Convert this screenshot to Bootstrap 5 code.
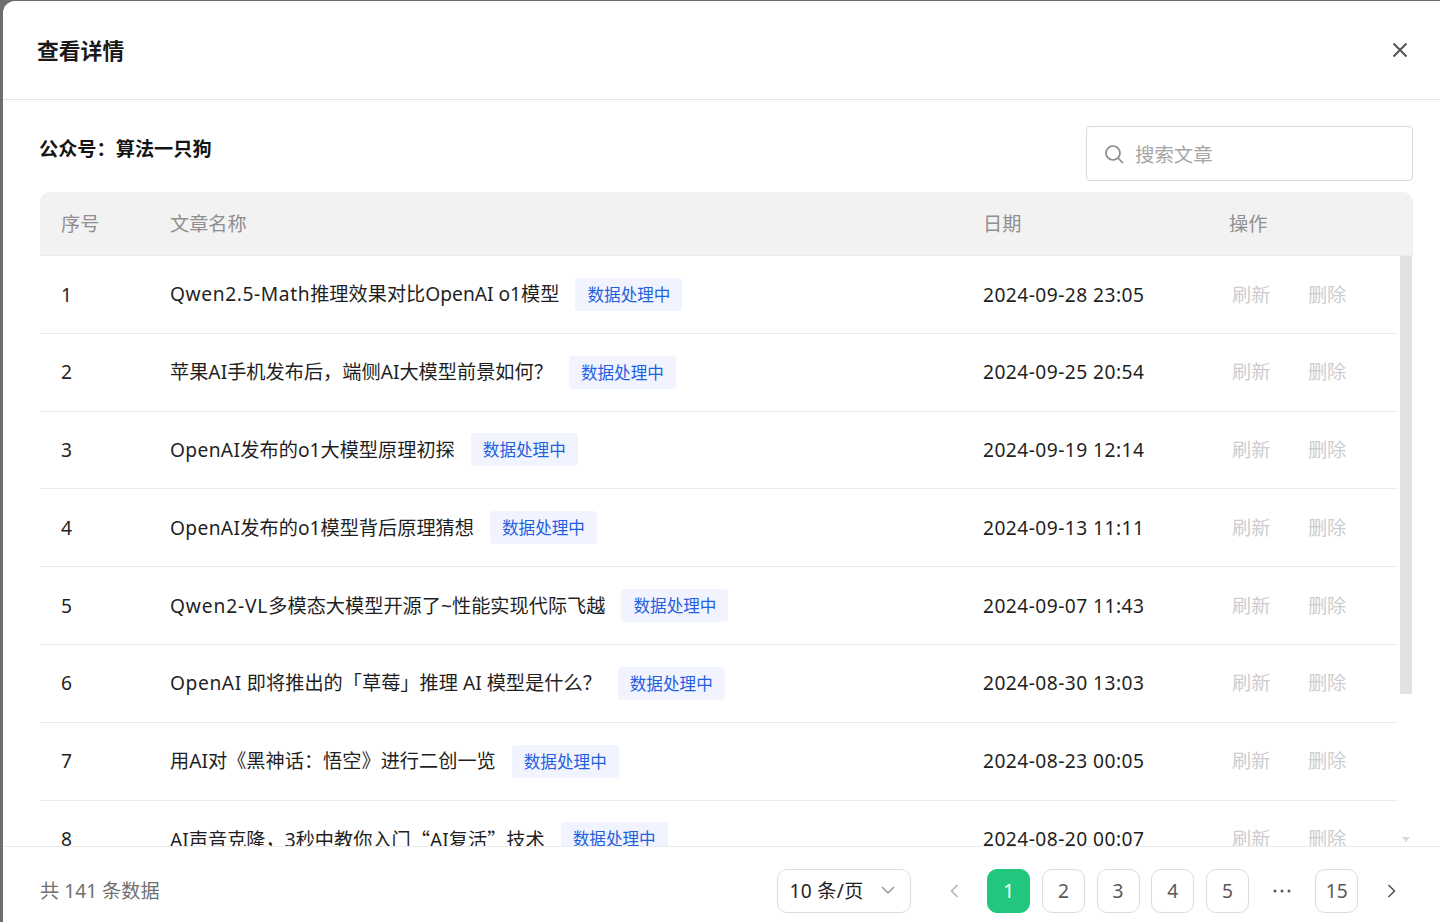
<!DOCTYPE html>
<html lang="zh">
<head>
<meta charset="utf-8">
<title>查看详情</title>
<link href="https://cdn.jsdelivr.net/npm/bootstrap@5.3.0/dist/css/bootstrap.min.css" rel="stylesheet">
<style>
html,body{height:100%;overflow:hidden}
body{background:#6e6e6e;font-family:"Noto Sans","Noto Sans CJK SC",sans-serif;font-size:19.2px;color:#1f1f1f}
.dlg{margin:1px 0 0 3px;height:921px;background:#fff;border-radius:12px 0 0 0;overflow:hidden}
.dlg-head{height:99px;padding:2px 32px 0 34px;border-bottom:1px solid #e3e5e7;flex:none}
.dlg-title{font-size:21.8px;font-weight:700;color:#1a1a1a}
.x-ic{margin-top:-2px}
.dlg-main{padding:26px 27px 0 37px;min-height:0;position:relative}
.acct{font-size:19.2px;font-weight:700;color:#141414;line-height:46px;margin-left:-1px}
.srch{width:327px;height:55px;border:1px solid #d9d9d9;border-radius:4px;padding:0 17px;gap:11px;color:#a6a6a6;font-size:19.4px}
.srch-t{padding-top:2px}
.tbl-wrap{margin-top:11px;position:relative;min-height:0;overflow:hidden}
.tbl-head{height:64px;padding-top:2px;background:#f2f2f2;border-radius:10px 10px 0 0;border-bottom:1px solid #e8ebef;color:#8f8f8f}
.tbl-row{height:77.8px;margin-right:15px;border-bottom:1px solid #e8ebef}
.tbl-row .c1,.tbl-row .c3,.tbl-row .c4,.c2>span:first-child{padding-top:1px}
.c1{width:130px;padding-left:21px;flex:none}
.c2{width:813px;flex:none;gap:16px}
.c3{width:246px;flex:none}
.tbl-row .c3{letter-spacing:.45px}
.c4{flex:none;gap:37.5px;color:#cdcdcd;padding-left:3px}
.tbl-head .c4{color:#8f8f8f;padding-left:0}
.tag{background:#f1f4ff;color:#1f5fe0;border-radius:4px;padding:0 12px;height:33px;line-height:33px;font-size:16.6px;white-space:nowrap}
.lat{letter-spacing:.6px}
.lat-s{letter-spacing:.35px}
.lat-w{letter-spacing:.85px}
.cq{font-family:"Noto Sans CJK SC",sans-serif}
.thumb{position:absolute;right:1px;top:64px;width:12px;height:438px;background:#e2e2e2}
.caret-d{position:absolute;right:3px;top:645px;width:0;height:0;border:4px solid transparent;border-top:5px solid #d9d9d9}
.dlg-foot{height:76px;flex:none;border-top:1px solid #ebebeb;padding:12px 27px 0 37px;color:#6f6f6f;position:relative;background:#fff}
.ft{padding-top:2px}
.sel{width:134px;height:44px;border:1px solid #dcdcdc;border-radius:10px;padding:0 15px 0 12px;color:#1f1f1f;margin-right:22px}
.sel-t{letter-spacing:.3px;padding-top:2px}
.pg{width:43px;height:44px;padding-top:1px;border:1px solid #dcdcdc;border-radius:10px;color:#595959;margin-right:11.7px}
.pg-on{background:#20c77c;border-color:#20c77c;color:#fff}
.pg-plain{width:43px;height:44px;color:#595959;margin-right:11.7px}
</style>
</head>
<body>
<div class="dlg d-flex flex-column">
  <div class="dlg-head d-flex align-items-center justify-content-between">
    <div class="dlg-title">查看详情</div>
    <svg class="x-ic" width="16" height="16" viewBox="0 0 16 16" fill="none" stroke="#555" stroke-width="2"><path d="M1.5 1.5l13 13M14.5 1.5l-13 13"/></svg>
  </div>
  <div class="dlg-main d-flex flex-column flex-grow-1">
    <div class="d-flex justify-content-between align-items-start flex-none">
      <div class="acct">公众号：算法一只狗</div>
      <div class="srch d-flex align-items-center">
        <svg width="20" height="20" viewBox="0 0 20 20" fill="none" stroke="#8c8c8c" stroke-width="1.7"><circle cx="9" cy="9" r="7"/><path d="M14 14l5 5"/></svg>
        <span class="srch-t">搜索文章</span>
      </div>
    </div>
    <div class="tbl-wrap flex-grow-1">
      <div class="tbl-head d-flex align-items-center">
        <div class="c1">序号</div><div class="c2">文章名称</div><div class="c3">日期</div><div class="c4">操作</div>
      </div>
      <div class="tbl-row d-flex align-items-center"><div class="c1">1</div><div class="c2 d-flex align-items-center"><span><span class="lat">Qwen2.5-Math</span>推理效果对比OpenAI o1模型</span><span class="tag">数据处理中</span></div><div class="c3">2024-09-28 23:05</div><div class="c4 d-flex"><span>刷新</span><span>删除</span></div></div>
      <div class="tbl-row d-flex align-items-center"><div class="c1">2</div><div class="c2 d-flex align-items-center"><span>苹果AI手机发布后，端侧AI大模型前景如何？</span><span class="tag">数据处理中</span></div><div class="c3">2024-09-25 20:54</div><div class="c4 d-flex"><span>刷新</span><span>删除</span></div></div>
      <div class="tbl-row d-flex align-items-center"><div class="c1">3</div><div class="c2 d-flex align-items-center"><span><span class="lat-s">OpenAI</span>发布的o1大模型原理初探</span><span class="tag">数据处理中</span></div><div class="c3">2024-09-19 12:14</div><div class="c4 d-flex"><span>刷新</span><span>删除</span></div></div>
      <div class="tbl-row d-flex align-items-center"><div class="c1">4</div><div class="c2 d-flex align-items-center"><span><span class="lat-s">OpenAI</span>发布的o1模型背后原理猜想</span><span class="tag">数据处理中</span></div><div class="c3">2024-09-13 11:11</div><div class="c4 d-flex"><span>刷新</span><span>删除</span></div></div>
      <div class="tbl-row d-flex align-items-center"><div class="c1">5</div><div class="c2 d-flex align-items-center"><span><span class="lat-w">Qwen2-VL</span>多模态大模型开源了~性能实现代际飞越</span><span class="tag">数据处理中</span></div><div class="c3">2024-09-07 11:43</div><div class="c4 d-flex"><span>刷新</span><span>删除</span></div></div>
      <div class="tbl-row d-flex align-items-center"><div class="c1">6</div><div class="c2 d-flex align-items-center"><span><span class="lat">OpenAI</span> 即将推出的「草莓」推理 AI 模型是什么？</span><span class="tag">数据处理中</span></div><div class="c3">2024-08-30 13:03</div><div class="c4 d-flex"><span>刷新</span><span>删除</span></div></div>
      <div class="tbl-row d-flex align-items-center"><div class="c1">7</div><div class="c2 d-flex align-items-center"><span>用AI对《黑神话：悟空》进行二创一览</span><span class="tag">数据处理中</span></div><div class="c3">2024-08-23 00:05</div><div class="c4 d-flex"><span>刷新</span><span>删除</span></div></div>
      <div class="tbl-row d-flex align-items-center"><div class="c1">8</div><div class="c2 d-flex align-items-center"><span>AI声音克隆，3秒中教你入门<span class="cq">“</span>AI复活<span class="cq">”</span>技术</span><span class="tag">数据处理中</span></div><div class="c3">2024-08-20 00:07</div><div class="c4 d-flex"><span>刷新</span><span>删除</span></div></div>
      <div class="thumb"></div>
      <div class="caret-d"></div>
    </div>
  </div>
  <div class="dlg-foot d-flex align-items-center">
    <div class="flex-grow-1 ft">共 141 条数据</div>
    <div class="sel d-flex align-items-center justify-content-between"><span class="sel-t">10 条/页</span><svg width="14" height="9" viewBox="0 0 14 9" fill="none" stroke="#9a9a9a" stroke-width="1.5"><path d="M1 1l6 6 6-6"/></svg></div>
    <div class="pg-plain d-flex align-items-center justify-content-center"><svg width="9" height="14" viewBox="0 0 9 14" fill="none" stroke="#b5b5b5" stroke-width="1.6"><path d="M7.5 1L1.5 7l6 6"/></svg></div>
    <div class="pg pg-on d-flex align-items-center justify-content-center">1</div>
    <div class="pg d-flex align-items-center justify-content-center">2</div>
    <div class="pg d-flex align-items-center justify-content-center">3</div>
    <div class="pg d-flex align-items-center justify-content-center">4</div>
    <div class="pg d-flex align-items-center justify-content-center">5</div>
    <div class="pg-plain d-flex align-items-center justify-content-center"><svg width="20" height="4" viewBox="0 0 20 4" fill="#595959"><circle cx="3" cy="2" r="1.5"/><circle cx="10" cy="2" r="1.5"/><circle cx="17" cy="2" r="1.5"/></svg></div>
    <div class="pg d-flex align-items-center justify-content-center">15</div>
    <div class="pg-plain d-flex align-items-center justify-content-center m-0"><svg width="9" height="14" viewBox="0 0 9 14" fill="none" stroke="#555" stroke-width="1.6"><path d="M1.5 1l6 6-6 6"/></svg></div>
  </div>
</div>
<script src="https://cdn.jsdelivr.net/npm/bootstrap@5.3.0/dist/js/bootstrap.bundle.min.js"></script>
</body>
</html>
